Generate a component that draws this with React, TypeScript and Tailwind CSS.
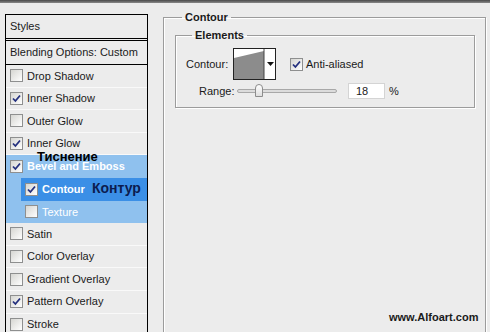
import React from "react";

const FONT = { fontFamily: '"Liberation Sans", Arial, sans-serif' };

function Check({ on }: { on?: boolean }) {
  return (
    <span className="grid h-[13px] w-[13px] shrink-0 place-items-center border border-[#8e8f8f] bg-gradient-to-br from-[#d6d6d2] to-white">
      {on && (
        <svg width="9" height="9" viewBox="0 0 9 9">
          <path d="M1 4.5 L3.4 7 L8 1.5" fill="none" stroke="#24307e" strokeWidth="1.8" />
        </svg>
      )}
    </span>
  );
}

type Row = { label: string; on?: boolean; sub?: boolean; tone?: "light" | "dark"; bold?: boolean };

const ROWS: Row[] = [
  { label: "Drop Shadow" },
  { label: "Inner Shadow", on: true },
  { label: "Outer Glow" },
  { label: "Inner Glow", on: true },
  { label: "Bevel and Emboss", on: true, tone: "light", bold: true },
  { label: "Contour", on: true, sub: true, tone: "dark", bold: true },
  { label: "Texture", sub: true, tone: "light" },
  { label: "Satin" },
  { label: "Color Overlay" },
  { label: "Gradient Overlay" },
  { label: "Pattern Overlay", on: true },
  { label: "Stroke" },
];

function StyleRow({ row }: { row: Row }) {
  const inner = (
    <div
      className={`flex h-full flex-1 items-center gap-[4px] pl-[4px] text-[11px] ${
        row.tone === "dark" ? "bg-[#3b8fe6] text-white" : row.tone === "light" ? "text-white" : "text-[#1a1a1a]"
      } ${row.bold ? "font-bold" : ""}`}
    >
      <Check on={row.on} />
      <span>{row.label}</span>
    </div>
  );
  return (
    <div
      className={`flex h-[22.6px] ${row.tone ? "bg-[#8fc1ee]" : "border-b border-[#f9f9f9]"} ${
        row.sub ? "pl-[15px]" : ""
      }`}
    >
      {inner}
    </div>
  );
}

function StylesPanel() {
  return (
    <div className="relative mt-[11px] ml-[5px] w-[143px] border-x border-t border-black">
      <div className="flex h-[24px] items-center border-b border-black pl-[4px] text-[11px] text-[#1a1a1a]">Styles</div>
      <div className="flex h-[25px] items-center border-y border-black mt-[1px] pl-[4px] text-[11px] text-[#1a1a1a]">
        Blending Options: Custom
      </div>
      {ROWS.map((r) => (
        <StyleRow key={r.label} row={r} />
      ))}
      <span className="absolute left-[31px] top-[135px] text-[13px] font-bold leading-none text-black">Тиснение</span>
      <span className="absolute left-[86px] top-[166px] text-[14px] font-bold leading-none text-[#0c1c4f]">Контур</span>
    </div>
  );
}

function ContourPicker() {
  return (
    <div className="flex h-[32px] w-[43px] border border-[#222] bg-white">
      <svg width="31" height="30" viewBox="0 0 31 30" className="block">
        <polygon points="0,9 30,2 30,30 0,30" fill="#8c8c8c" />
        <line x1="30" y1="0" x2="30" y2="30" stroke="#444" strokeWidth="1" />
      </svg>
      <div className="grid flex-1 place-items-center">
        <svg width="7" height="4" viewBox="0 0 7 4">
          <polygon points="0,0 7,0 3.5,4" fill="#111" />
        </svg>
      </div>
    </div>
  );
}

export default function App() {
  return (
    <div className="relative h-[332px] w-[490px] overflow-hidden bg-[#ececec]" style={FONT}>
      <div className="h-[3px] bg-gradient-to-b from-[#4a4a4a] to-[#8a8a8a]" />
      <div className="flex">
        <StylesPanel />
        <fieldset className="ml-[15px] mt-[7px] h-[340px] w-[323px] border border-[#9c9c9c] pl-[11px] pr-[10px] shadow-[inset_1px_1px_0_#fff,1px_1px_0_#fff]">
          <legend className="ml-[7px] px-[3px] text-[11px] font-bold leading-[14px] text-[#1a1a1a]">Contour</legend>
          <fieldset className="mt-[4px] border border-[#9c9c9c] pb-[8px] pl-[10px] shadow-[inset_1px_1px_0_#fff,1px_1px_0_#fff]">
            <legend className="ml-[6px] px-[3px] text-[11px] font-bold leading-[14px] text-[#1a1a1a]">Elements</legend>
            <div className="mt-[6px] flex items-center text-[11px] text-[#1a1a1a]">
              <span className="w-[47px]">Contour:</span>
              <ContourPicker />
              <span className="ml-[14px] flex items-center gap-[3px]">
                <Check on />
                Anti-aliased
              </span>
            </div>
            <div className="mt-[3px] flex h-[16px] items-center text-[11px] text-[#1a1a1a]">
              <span className="ml-[13px] w-[38px]">Range:</span>
              <div className="relative h-[4px] w-[100px] rounded-full border border-[#a8a8a8] bg-[#dcdcdc]">
                <span className="absolute -top-[6px] left-[17px] h-[13px] w-[8px] rounded-t-[4px] border border-[#8c8c8c] bg-gradient-to-b from-white to-[#dedede]" />
              </div>
              <div className="ml-[11px] flex h-[16px] w-[37px] items-center border border-[#d4d4d4] bg-white pl-[7px]">18</div>
              <span className="ml-[4px]">%</span>
            </div>
          </fieldset>
        </fieldset>
      </div>
      <span className="absolute left-[389px] top-[309px] text-[11px] font-bold text-[#1a1a1a]">www.Alfoart.com</span>
    </div>
  );
}
